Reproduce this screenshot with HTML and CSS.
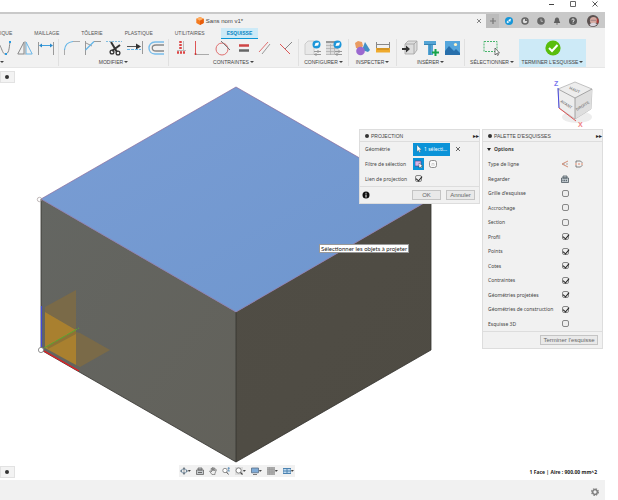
FILE: index.html
```html
<!DOCTYPE html>
<html lang="fr">
<head>
<meta charset="utf-8">
<title>Sans nom v1*</title>
<link rel="stylesheet" href="styles.css">
</head>
<body>
<div class="app">
  <div class="window-controls">
    <button aria-label="Réduire"><svg viewBox="0 0 8 8"><path d="M2 4.500h5" stroke="#444" fill="none"/></svg></button>
    <button aria-label="Agrandir"><svg viewBox="0 0 8 8"><path d="M1.500 1.500h5v5h-5z" stroke="#666" fill="none"/></svg></button>
    <button aria-label="Fermer"><svg viewBox="0 0 8 8"><path d="M1.500 1.500l5 5M6.500 1.500l-5 5" stroke="#444" fill="none" stroke-width=".9"/></svg></button>
  </div>

  <header class="tab-bar">
    <div class="doc-tab">
      <div class="doc-title">
        <svg class="doc-icon" viewBox="0 0 8 8"><path d="M4 0l3.700 1.800v4.300L4 8 .3 6.100V1.800z" fill="#f47b20"/><path d="M4 0l3.700 1.800L4 3.800.3 1.800z" fill="#ffb066"/><path d="M4 3.800l3.700-2v4.300L4 8z" fill="#e85d0c"/></svg>
        <span>Sans nom v1*</span>
      </div>
      <button class="tab-close" aria-label="Fermer l'onglet"><svg viewBox="0 0 8 8"><path d="M2 2l4 4M6 2L2 6" stroke="#777" fill="none" stroke-width=".9"/></svg></button>
    </div>
    <button class="tab-new" aria-label="Nouveau"><svg viewBox="0 0 8 8"><path d="M1 4h6M4 1v6" stroke="#777" fill="none" stroke-width="1.200"/></svg></button>
    <div class="account">
      <button aria-label="Extensions"><svg viewBox="0 0 8 8"><circle cx="4" cy="4" r="4" fill="#1696d8"/><path d="M2 5.800l.4-2 1.500 1.500zM3.300 3.300L5.700 2 5 4.800" fill="#fff" stroke="#fff" stroke-width=".5"/></svg></button>
      <button aria-label="Cloud"><svg viewBox="0 0 8 8"><circle cx="4" cy="4" r="3" fill="#ddd" stroke="#666" stroke-width="1.500"/><path d="M4 4V1l3 3z" fill="#666"/></svg></button>
      <button aria-label="Tâches"><svg viewBox="0 0 8 8"><circle cx="4" cy="4" r="3.800" fill="#666"/><path d="M4 1.800V4.300h2" stroke="#ccc" fill="none" stroke-width=".8"/></svg></button>
      <button aria-label="Notifications"><svg viewBox="0 0 8 8"><path d="M4 .5c1.800 0 2.200 1.500 2.200 3L7.200 6H.8l1-2.500C1.800 2 2.200.5 4 .5zM3 6.500h2L4 8z" fill="#606060"/></svg></button>
      <button aria-label="Aide"><svg viewBox="0 0 8 8"><circle cx="4" cy="4" r="4" fill="#5d5d5d"/><path d="M2.800 3.200c0-1.700 2.500-1.500 2.400-.1C5.200 4 4 4 4 5M4 5.600v.9" stroke="#fff" fill="none" stroke-width=".9"/></svg></button>
      <button class="avatar" aria-label="Compte"><svg viewBox="0 0 12 12"><circle cx="6" cy="6" r="6" fill="#5b5150"/><circle cx="6.500" cy="5.500" r="3.600" fill="#d3a9a0"/><path d="M3.500 5.300h5.500" stroke="#937a80" stroke-width=".8"/><path d="M2.500 10c1-3 6-3 7.500-.5A6 6 0 0 1 2.500 10z" fill="#d9d4dd"/><path d="M10 2.500a6 6 0 0 1 1 6.500L9.500 7z" fill="#b13e3a"/></svg></button>
    </div>
  </header>

  <nav class="menu">
    <a href="#">IQUE</a><a href="#">MAILLAGE</a><a href="#">TÔLERIE</a><a href="#">PLASTIQUE</a><a href="#">UTILITAIRES</a><a href="#" class="current">ESQUISSE</a>
  </nav>

  <div class="ribbon">
    <section class="group create">
      <div class="tools">
        <svg viewBox="0 0 16 16"><path d="M-4 6C5-4 5 14 9 14c4 0 4-5 5-12" fill="none" stroke="#888"/><path d="M13 1h2v2h-2zM9 13h2v2H9z" fill="#2b9be0"/></svg>
        <svg viewBox="0 0 16 16"><path d="M7 2v12H.8z" fill="none" stroke="#888"/><path d="M9 2v12h6.200z" fill="none" stroke="#68b6e8"/><path d="M8 1v14" stroke="#aaa"/></svg>
        <svg viewBox="0 0 16 16"><path d="M.5 2v13M15.500 2v13" stroke="#999"/><path d="M2 5.500h12" stroke="#3f9fdd"/><path d="M1 5.500l3-2v4zM15 5.500l-3-2v4z" fill="#2789cc"/></svg>
      </div>
      <button class="label more" aria-label="Créer"></button>
    </section>
    <section class="group modify">
      <div class="tools">
        <svg viewBox="0 0 16 16"><path d="M.5 15V9M9 1.500h7" stroke="#aaa" fill="none"/><path d="M.5 10C1 4 4 2 9 1.500" stroke="#62b5e8" fill="none" stroke-width="1.200"/></svg>
        <svg viewBox="0 0 16 16"><path d="M.5 15V1M9 1.500h7M1 3l6 3" stroke="#999" fill="none"/><path d="M.5 10L9 1.500" stroke="#62b5e8" stroke-width="1.200"/></svg>
        <svg viewBox="0 0 16 16"><path d="M0 1.500h16" stroke="#80bde0" stroke-dasharray="2 1"/><path d="M5 2l6 10M14 5L6 11" stroke="#333" stroke-width="2"/><circle cx="6" cy="12" r="1.900" fill="none" stroke="#333" stroke-width="1.300"/><circle cx="12" cy="13" r="1.900" fill="none" stroke="#333" stroke-width="1.300"/></svg>
        <svg viewBox="0 0 16 16"><path d="M0 6.500h11" stroke="#555"/><path d="M9 3.500l5 3-5 3z" fill="#333"/><path d="M15.500 1v13" stroke="#999"/><path d="M0 9.500h14" stroke="#65b5e8" stroke-dasharray="3 1"/></svg>
        <svg viewBox="0 0 16 16"><path d="M16 2H7C-1 2-1 14 7 14h9" stroke="#78bdeb" fill="none" stroke-width="1.400"/><path d="M16 5H8c-5 0-5 6 0 6h8" stroke="#888" fill="none" stroke-width="1.300"/></svg>
      </div>
      <button class="label more">MODIFIER</button>
    </section>
    <section class="group constrain">
      <div class="tools">
        <svg viewBox="0 0 16 16"><path d="M10.500 1v9M4 10.500h9" stroke="#bbb"/><path d="M7.500 1v9" stroke="#d44" stroke-width="2.500" stroke-dasharray="2 1"/><path d="M4 12.500h9" stroke="#d44" stroke-width="2.500" stroke-dasharray="2 1"/></svg>
        <svg viewBox="0 0 16 16"><path d="M1.500 1v14" stroke="#d55"/><path d="M1.500 14.500H15" stroke="#aaa"/><circle cx="1.500" cy="14" r="1" fill="#c33"/></svg>
        <svg viewBox="0 0 16 16"><circle cx="7" cy="9" r="6" fill="none" stroke="#e07070"/><path d="M6 1l9 9" stroke="#777"/></svg>
        <svg viewBox="0 0 16 16"><path d="M3 5.500h10" stroke="#cf4545" stroke-width="2.500"/><path d="M3 10.500h10" stroke="#666" stroke-width="2.500"/></svg>
        <svg viewBox="0 0 16 16"><path d="M2 12L11 2" stroke="#e07070"/><path d="M5 14l8-10" stroke="#999"/></svg>
        <svg viewBox="0 0 16 16"><path d="M2 4l10 10" stroke="#d55"/><path d="M7 9l7-7" stroke="#888"/></svg>
      </div>
      <button class="label more">CONTRAINTES</button>
    </section>
    <section class="group configure">
      <div class="tools">
        <svg viewBox="0 0 16 16"><path d="M0 14.500V4l3-3h6v13.500z" fill="#e8e8e8" stroke="#ccc"/><path d="M9 11.500h7M9 14.500h7" stroke="#999"/><path d="M13 10v3M11 13v3" stroke="#999"/><circle cx="11.500" cy="4.500" r="4" fill="#1c96d9"/><path d="M9.500 6l1-3 3.500-.5-.8 3z" fill="#fff"/></svg>
        <svg viewBox="0 0 16 16"><path d="M0 1h13v13.500H0z" fill="#ddd"/><path d="M0 2h9" stroke="#999" stroke-width="2"/><path d="M0 5.500h12M0 8.500h12M0 11.500h8M0 14.500h8M4.500 4v11M8.500 4v11" stroke="#aaa" stroke-width=".7"/><path d="M9 11.500h7M9 14.500h7M13 10v3M11 13v3" stroke="#999"/><circle cx="11.500" cy="4.500" r="4" fill="#1c96d9"/><path d="M9.500 6l1-3 3.500-.5-.8 3z" fill="#fff"/></svg>
      </div>
      <button class="label more">CONFIGURER</button>
    </section>
    <section class="group inspect">
      <div class="tools">
        <svg viewBox="0 0 16 16"><path d="M8 10l3-8 5 8-2 2z" fill="#438fc5"/><path d="M1 3l3-2 4 1 1 4-3 3-4-1z" fill="#e99b62"/><circle cx="6.500" cy="11" r="4.300" fill="#9b69d0"/></svg>
        <svg viewBox="0 0 16 16"><path d="M1 4.500h14M1.500 2v6M14.500 2v6" stroke="#888" fill="none"/><path d="M1 8h14v4.500H1z" fill="#efaa2d"/><path d="M3 8v2M5 8v2M7 8v2M9 8v2M11 8v2M13 8v2" stroke="#946615" stroke-width=".6"/></svg>
      </div>
      <button class="label more">INSPECTER</button>
    </section>
    <section class="group insert">
      <div class="tools">
        <svg viewBox="0 0 16 16"><path d="M3 4l3-3h9v9l-3 4H3z" fill="#ddd" stroke="#999" stroke-width=".7"/><path d="M3 4h9v10M12 4l3-3" fill="none" stroke="#aaa"/><path d="M0 8h4V5.500L8 9l-4 3.500V10H0z" fill="#333"/></svg>
        <svg viewBox="0 0 16 16"><path d="M1 1h12v4h-3v10H5V5H1z" fill="#55a5d5"/><path d="M1 4.500h12M7 5v10" stroke="#3583b3"/><path d="M12.500 9v7M9 12.500h7" stroke="#16a34a" stroke-width="2"/></svg>
        <svg viewBox="0 0 16 16"><path d="M1 1h15v14H1z" fill="#55a6dc"/><path d="M1 11l4-5 5 5 2-2 4 4v2H1z" fill="#286fab"/><circle cx="11.500" cy="4.500" r="1.600" fill="#fff3c5"/></svg>
      </div>
      <button class="label more">INSÉRER</button>
    </section>
    <section class="group select">
      <div class="tools">
        <svg viewBox="0 0 16 16"><path d="M0 1.500h13v10H0z" fill="none" stroke="#48b56c" stroke-dasharray="2 1"/><path d="M11 8v7l1.500-1.500 1 2 1-.5-1-2h2z" fill="#fff" stroke="#444" stroke-width=".7"/></svg>
      </div>
      <button class="label more">SÉLECTIONNER</button>
    </section>
    <section class="group finish">
      <div class="tools">
        <svg viewBox="0 0 16 16"><circle cx="8" cy="8" r="7.600" fill="#59bd0c"/><path d="M4 8l3 3 5.500-6" stroke="#fff" stroke-width="2" fill="none"/></svg>
      </div>
      <button class="label more">TERMINER L'ESQUISSE</button>
    </section>
  </div>

  <main class="canvas">
    <svg class="scene" viewBox="0 68 605 412" role="img" aria-label="Cube">
      <defs>
        <linearGradient id="top" x1="0" y1="0" x2="1" y2="1"><stop offset="0" stop-color="#7a9dd4"/><stop offset="1" stop-color="#6e96ce"/></linearGradient>
        <linearGradient id="left" x1="0" y1="0" x2="1" y2="1"><stop offset="0" stop-color="#646662"/><stop offset="1" stop-color="#62615a"/></linearGradient>
        <linearGradient id="right" x1="0" y1="0" x2="1" y2="1"><stop offset="0" stop-color="#504d45"/><stop offset="1" stop-color="#4e4b43"/></linearGradient>
      </defs>
      <path d="M41 199l195 113v150L41 350z" fill="url(#left)"/>
      <path d="M236 312l195-113v151L236 462z" fill="url(#right)"/>
      <path d="M236 87l195 112-195 113L41 199z" fill="url(#top)"/>
      <path d="M41 350V199M236 312v150M41 350l195 112 195-112V199" fill="none" stroke="#33322f" stroke-width=".8"/>
      <path d="M236 87l195 112-195 113L41 199z" fill="none" stroke="#8a6b9c" stroke-width=".7"/>
      <path d="M45 307l31-17v40l-31-18z" fill="#7a6a48"/>
      <path d="M45 312l31 18v35l-31-17z" fill="#a9802f"/>
      <path d="M76 332l4 1 30 17-30 17-4-2z" fill="#7a6a48"/>
      <path d="M47 346l29-16v4l-28 15z" fill="#8d7335"/>
      <path d="M44 348l35-20" stroke="#56a833" stroke-dasharray="12 1"/>
      <path d="M41.500 347v-41" stroke="#4148d8" stroke-width="1.200"/>
      <path d="M44 351l35 20" stroke="#e51d22" stroke-width="1.400"/>
      <circle cx="41" cy="350" r="2.600" fill="#fff" stroke="#777" stroke-width=".8"/>
      <circle cx="39.500" cy="199.500" r="2.200" fill="none" stroke="#a39a9a" stroke-width=".7"/>
      <g class="view-cube">
        <ellipse cx="577" cy="117" rx="15" ry="6" fill="#ededed"/>
        <path d="M575 82l17 7-1 20-16 10-16-11-1-19z" fill="#ededed" stroke="#aaa" stroke-width=".7"/>
        <path d="M575 98l17-9-1 20-16 10z" fill="#dedede"/>
        <path d="M558 89l17 9 17-9M575 98v21" fill="none" stroke="#888" stroke-width=".7"/>
        <path d="M558 88l1 20" stroke="#4b4be0"/><path d="M559 108l17 13" stroke="#df5555"/>
        <text transform="translate(569 89) rotate(24)">HAUT</text>
        <text transform="translate(560 102) rotate(32)">AVANT</text>
        <text transform="translate(577 111) rotate(-32)">DROITE</text>
        <text class="axis-z" x="554" y="86">Z</text><text class="axis-x" x="578" y="127">X</text>
      </g>
    </svg>

    <button class="handle handle-top" aria-label="Navigateur"><i></i></button>
    <button class="handle handle-bottom" aria-label="Commentaires"><i></i></button>

    <form class="panel projection">
      <h2><i></i>PROJECTION<span>▸▸</span></h2>
      <div class="rows">
        <div class="row"><span>Géométrie</span><button type="button" class="picked"><svg viewBox="0 0 8 8"><path d="M2 0v6.500l1.500-1.300 1 2.300 1-.5-1-2.200h2z" fill="#fff" stroke="#555" stroke-width=".3"/></svg>1 sélecti...</button><button type="button" class="plain" aria-label="Effacer"><svg viewBox="0 0 8 8"><path d="M2 2l4 4M6 2L2 6" stroke="#444" stroke-width=".8" fill="none"/></svg></button></div>
        <div class="row"><span>Filtre de sélection</span><button type="button" class="filter on" aria-label="Entités"><svg viewBox="0 0 8 8"><path d="M0 1h6v5H0z" fill="#d7b7e8" stroke="#5c3978" stroke-width=".6"/><path d="M4 3v5l1.300-1 1 1 .7-.6-.9-1.200H8z" fill="#fff" stroke="#333" stroke-width=".4"/></svg></button><button type="button" class="filter" aria-label="Corps"><svg viewBox="0 0 8 8"><rect x=".5" y=".5" width="7" height="7" rx="2" fill="#fafafa" stroke="#777" stroke-width=".8"/><path d="M3 6V3.500h2V6" fill="none" stroke="#bbb" stroke-width=".6"/></svg></button></div>
        <div class="row"><label for="link">Lien de projection</label><input id="link" type="checkbox" checked></div>
      </div>
      <footer><svg class="info" viewBox="0 0 8 8"><circle cx="4" cy="4" r="3.500" fill="#111"/><path d="M4 1.800v1M4 3.500v3" stroke="#fff"/></svg><button type="button">OK</button><button type="button">Annuler</button></footer>
    </form>

    <form class="panel palette">
      <h2><i></i>PALETTE D'ESQUISSES<span>▸▸</span></h2>
      <h3>Options</h3>
      <div class="rows">
        <div class="row"><span>Type de ligne</span><button type="button" class="plain" aria-label="Construction"><svg viewBox="0 0 8 8"><path d="M7 1L1 4l6 3" fill="none" stroke="#cf8065" stroke-width=".9"/><path d="M2 4h5" stroke="#999" stroke-width=".8" stroke-dasharray="2 1"/></svg></button><button type="button" class="plain centerline" aria-label="Axe"><svg viewBox="0 0 8 8"><path d="M1 3V1h4.500L7 2.500V3M1 5v2h4.500L7 5.500V5" fill="none" stroke="#666" stroke-width=".8"/><path d="M0 4h8" stroke="#dc8060" stroke-width=".9" stroke-dasharray="2 1"/></svg></button></div>
        <div class="row"><span>Regarder</span><button type="button" class="plain" aria-label="Regarder"><svg viewBox="0 0 8 8"><path d="M.5 3h7v4.500h-7zM2 1h4v2H2z" fill="#c9d1d6" stroke="#4f5b63" stroke-width=".8"/><path d="M1.500 5.500h5" stroke="#4f5b63" stroke-width="1.300" stroke-dasharray="1 .7"/></svg></button></div>
        <div class="row"><label for="o1">Grille d'esquisse</label><input id="o1" type="checkbox"></div>
        <div class="row"><label for="o2">Accrochage</label><input id="o2" type="checkbox"></div>
        <div class="row"><label for="o3">Section</label><input id="o3" type="checkbox"></div>
        <div class="row"><label for="o4">Profil</label><input id="o4" type="checkbox" checked></div>
        <div class="row"><label for="o5">Points</label><input id="o5" type="checkbox" checked></div>
        <div class="row"><label for="o6">Cotes</label><input id="o6" type="checkbox" checked></div>
        <div class="row"><label for="o7">Contraintes</label><input id="o7" type="checkbox" checked></div>
        <div class="row"><label for="o8">Géométries projetées</label><input id="o8" type="checkbox" checked></div>
        <div class="row"><label for="o9">Géométries de construction</label><input id="o9" type="checkbox" checked></div>
        <div class="row"><label for="o10">Esquisse 3D</label><input id="o10" type="checkbox"></div>
      </div>
      <footer><button type="button">Terminer l'esquisse</button></footer>
    </form>

    <div class="tooltip" role="tooltip">Sélectionner les objets à projeter</div>

    <div class="view-tools">
      <button class="more" aria-label="Orbite"><svg viewBox="0 0 8 8"><path d="M4 0l1.500 2h-3zM4 8l1.500-2h-3zM0 4l2-1.500v3zM8 4L6 2.500v3z" fill="#6b7780"/><ellipse cx="4" cy="4" rx="3.200" ry="1.600" fill="none" stroke="#6b8ba5" stroke-width=".7"/><path d="M4 2v4" stroke="#777" stroke-width=".7"/></svg></button>
      <button aria-label="Regarder"><svg viewBox="0 0 8 8"><path d="M.5 3h7v4.500h-7zM2 1h4v2H2z" fill="#c5c9cc" stroke="#666" stroke-width=".8"/><path d="M2 5.500h4" stroke="#666"/></svg></button>
      <button aria-label="Panoramique"><svg viewBox="0 0 8 8"><path d="M3 7.600L.6 4.200l.8-.4L2.500 5 2 1.500l.8-.2.6 2.400L3.500.5h.8l.2 3L5.300 1l.7.200-.4 2.700L6.800 2.400l.6.4L6 6.300v1.300z" fill="#eee" stroke="#555" stroke-width=".6"/></svg></button>
      <button aria-label="Zoom"><svg viewBox="0 0 8 8"><circle cx="3" cy="3.500" r="2.200" fill="#fff" stroke="#777" stroke-width=".8"/><path d="M4.500 5l2 2.500" stroke="#555"/><path d="M6.700 0v4M5.500 1.300h2.400M5.500 4h2.400" stroke="#4c83b0" stroke-width=".7"/></svg></button>
      <button class="more" aria-label="Ajuster"><svg viewBox="0 0 8 8"><path d="M0 0h8v8H0z" fill="#ddd"/><circle cx="3.600" cy="3.500" r="2.600" fill="#fff" stroke="#777" stroke-width=".9"/><path d="M5.500 5.500l2 2" stroke="#444" stroke-width="1.100"/></svg></button>
      <button class="more" aria-label="Affichage"><svg viewBox="0 0 8 8"><path d="M.5 1h7v4.800h-7z" fill="#7fabd7" stroke="#5a7086" stroke-width=".8"/><path d="M2 7.500h4" stroke="#777"/></svg></button>
      <button class="more" aria-label="Grille"><svg viewBox="0 0 8 8"><path d="M0 0h8v8H0z" fill="#aaa"/><path d="M0 2.500h8M0 5h8M2.500 0v8M5 0v8" stroke="#999" stroke-width=".5"/></svg></button>
      <button class="more" aria-label="Fenêtres"><svg viewBox="0 0 8 8"><path d="M0 1h8v6H0z" fill="#4c83b0"/><path d="M.5 2h3v1.500h-3zM4.500 2h3v1.500h-3zM.5 4.500h3V6h-3zM4.500 4.500h3V6h-3z" fill="#bed9f0"/></svg></button>
    </div>
    <p class="selection-info">1 Face | Aire : 900.00 mm^2</p>
  </main>

  <footer class="timeline">
    <button aria-label="Paramètres"><svg viewBox="0 0 8 8"><circle cx="4" cy="4" r="3.300" fill="none" stroke="#777" stroke-width="1.200" stroke-dasharray="1.600 1"/><circle cx="4" cy="4" r="2.300" fill="none" stroke="#777" stroke-width="1.300"/></svg></button>
  </footer>
</div>
</body>
</html>
```
FILE: styles.css
```css
* { box-sizing: border-box; }
body { margin: 0; padding-right: 13px; background: #fff; color: #444; font: 5px/8px "Liberation Sans", sans-serif; overflow: hidden; }
button { margin: 0; padding: 0; border: 0; background: none; color: inherit; font: inherit; white-space: nowrap; }
svg { display: block; }
h2, h3, p { margin: 0; font: inherit; }
button svg { width: 8px; height: 8px; }

.app { display: flex; flex-direction: column; min-height: 100vh; }
.window-controls { display: flex; align-items: flex-start; justify-content: flex-end; gap: 14px; height: 12px; padding-right: 6px; }

.tab-bar { display: flex; height: 16px; padding-top: 2px; background: #c9c9c9; }
.doc-tab { display: flex; align-items: center; flex: 1; background: #f1f1f1; }
.doc-title { display: flex; align-items: center; justify-content: center; gap: 2px; flex: 1; padding-right: 36px; font-size: 6px; }
.doc-icon { width: 8px; height: 8px; }
.tab-close { margin-right: 3px; }
.tab-new { display: grid; place-items: center; width: 13px; background: #bcbcbc; }
.account { display: flex; align-items: center; gap: 8px; width: 106px; padding: 0 6px; }
.account .avatar { margin-left: 2px; }
.avatar svg { width: 12px; height: 12px; }

.menu { display: flex; gap: 10px; height: 11px; background: #f1f1f1; line-height: 11px; }
.menu a { padding: 0 6px; color: #555; text-decoration: none; }
.menu a:first-child { padding-left: 0; }
.menu .current { background: #cdeaf7; border-bottom: 1px solid #0a96d6; color: #0785c4; font-weight: bold; }

.ribbon { display: flex; height: 29px; background: #f1f1f1; border-bottom: 1px solid #e6e6e6; }
.group { display: flex; flex-direction: column; align-items: center; border-right: 1px solid #e0e0e0; height: 27px; }
.tools { display: flex; justify-content: center; gap: 5px; padding-top: 1px; }
.tools svg { width: 16px; height: 16px; overflow: visible; }
.more { display: flex; align-items: center; gap: 1px; }
.more::after { content: ""; border: 2px solid transparent; border-top-color: #444; border-bottom: 0; }
.group .label { height: 8px; margin-top: 2px; color: #444; }
.create { width: 59px; align-items: flex-start; }
.create .tools { margin-left: -4px; }
.modify { width: 110px; }
.constrain { width: 130px; }
.configure { width: 50px; }
.inspect { width: 48px; }
.insert { width: 68px; }
.select { width: 54px; border: 0; }
.finish { width: 67px; height: 28px; border: 0; background: #cdeaf7; }

.canvas { position: relative; flex: 1; }
.scene { width: 100%; height: 100%; }
.view-cube text { fill: #888; font-size: 4px; font-weight: bold; }
.view-cube .axis-z { fill: #7777ee; font-size: 7px; }
.view-cube .axis-x { fill: #f08080; font-size: 7px; }

.handle { position: absolute; left: 0; width: 15px; height: 12px; padding-left: 4px; border: 1px solid #e2e2e2; background: #f3f3f3; }
.handle-top { top: 3px; }
.handle-bottom { bottom: 2px; }
.handle i, .panel h2 i { display: block; width: 4px; height: 4px; border-radius: 50%; background: #333; }

.panel { position: absolute; top: 61px; width: 121px; border: 1px solid #ddd; background: #f1f1f1; }
.projection { right: 125px; }
.palette { right: 2px; }
.panel h2 { display: flex; align-items: center; gap: 2px; height: 12px; padding: 0 0 0 5px; border-bottom: 1px solid #ddd; }
.panel h2 span { margin-left: auto; color: #222; font-size: 6px; }
.panel h3 { display: flex; align-items: center; gap: 3px; height: 15px; padding-left: 4px; font: bold 5px/15px "Noto Sans", sans-serif; }
.panel h3::before { content: ""; border: 2px solid transparent; border-top: 3px solid #222; border-bottom: 0; }
.rows { display: grid; grid-auto-rows: 1fr; font-family: "Noto Sans", sans-serif; }
.projection .rows { height: 44px; }
.palette .rows { height: 174px; }
.row { display: flex; align-items: center; padding-left: 5px; white-space: nowrap; }
.row > :first-child { width: 48px; }
.palette .row > :first-child { width: 73px; }
.centerline { margin-left: 6px; }
.picked { display: flex; align-items: center; gap: 1px; width: 37px; height: 13px; margin-right: 4px; padding-left: 2px; background: #0b93d8; color: #fff; }
.filter { display: grid; place-items: center; width: 11px; height: 12px; margin-right: 3px; }
.filter.on { background: #0b93d8; }
input { appearance: none; position: relative; width: 7px; height: 7px; margin: 0 2px; border: 1px solid #888; border-radius: 2px; background: #eee; }
.palette input { margin: 0 1px; }
input:checked::after { content: ""; position: absolute; left: 1px; top: -1px; width: 3px; height: 5px; border: solid #222; border-width: 0 1px 1px 0; transform: rotate(40deg); }
.panel footer { display: flex; align-items: center; justify-content: flex-end; gap: 5px; height: 17px; padding-right: 4px; border-top: 1px solid #ddd; }
.panel footer button { width: 29px; height: 10px; border: 1px solid #c4c4c4; background: #e9e9e9; color: #666; font-size: 6px; line-height: 8px; }
.palette footer button { width: 58px; }
.info { width: 8px; height: 8px; margin: 0 auto 0 2px; }

.tooltip { position: absolute; left: 319px; top: 176px; padding: 0 1px; border: 1px solid #999; background: #fff; color: #222; font: 6px/7px Lato, sans-serif; white-space: nowrap; }
.view-tools { position: absolute; left: 179px; bottom: 3px; display: flex; align-items: center; gap: 5px; height: 12px; padding: 0 1px; background: #f1f1f1; }
.view-tools .more { gap: 0; }
.view-tools .more::after { border-width: 2px 2px 0 1px; }
.selection-info { position: absolute; right: 8px; bottom: 4px; color: #222; font: bold 5px/8px "Noto Sans", sans-serif; }

.timeline { display: flex; align-items: center; justify-content: flex-end; height: 20px; padding: 4px 6px 0 0; background: #f1f1f1; }
```
